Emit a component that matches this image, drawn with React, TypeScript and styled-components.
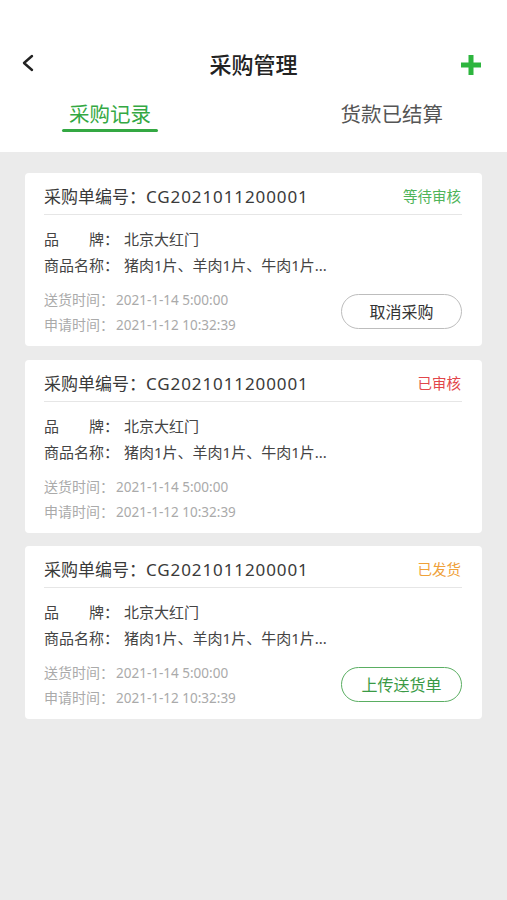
import React, { useState } from "react";
import styled, { createGlobalStyle } from "styled-components";

const GlobalStyle = createGlobalStyle`
  html, body {
    margin: 0;
    padding: 0;
    background: #ebebeb;
    font-family: "Noto Sans", "Noto Sans CJK SC", sans-serif;
  }
`;

const Page = styled.div`
  min-height: 900px;
  background: #ebebeb;
`;

const Header = styled.div`
  background: #ffffff;
  padding-top: 40px;
`;

const NavBar = styled.div`
  height: 46px;
  display: grid;
  grid-template-columns: 60px 1fr 60px;
  align-items: center;
`;

const BackBtn = styled.div`
  display: flex;
  align-items: center;
  padding-left: 21px;
`;

const AddBtn = styled.div`
  display: flex;
  justify-content: flex-end;
  align-items: center;
  padding-right: 25px;
  padding-top: 4px;
`;

const Title = styled.div`
  text-align: center;
  font-family: "Noto Sans CJK SC", sans-serif;
  font-size: 22px;
  font-weight: 500;
  color: #222;
`;

const Tabs = styled.div`
  display: flex;
  justify-content: space-between;
  padding: 12px 57px 20px 62px;
`;

const Tab = styled.div<{ $active?: boolean }>`
  padding: 0 7px;
  display: flex;
  flex-direction: column;
  align-items: stretch;
  cursor: pointer;
  font-family: "Noto Sans CJK SC", sans-serif;
  font-size: 20.5px;
  line-height: 30px;
  color: ${(p) => (p.$active ? "#34a843" : "#555")};
  text-align: center;

  &::after {
    content: "";
    display: block;
    height: 3px;
    margin: 1px -7px 0;
    border-radius: 2px;
    background: ${(p) => (p.$active ? "#34a843" : "transparent")};
  }
`;

const List = styled.div`
  display: flex;
  flex-direction: column;
  gap: 13.5px;
  padding: 21px 25px;
`;

const Card = styled.div`
  background: #fff;
  border-radius: 4px;
  padding: 0 20px 0 19px;
  height: 173px;
  box-sizing: border-box;
`;

const CardHead = styled.div`
  height: 42px;
  display: flex;
  align-items: center;
  justify-content: space-between;
  border-bottom: 1px solid #e6e6e6;
  padding-top: 4px;
  box-sizing: border-box;
`;

const OrderNo = styled.div`
  font-family: "Noto Sans CJK SC", sans-serif;
  font-size: 17px;
  color: #3a3a3a;
`;

const Code = styled.span`
  font-family: "Noto Sans", sans-serif;
  letter-spacing: 0.9px;
`;

const Status = styled.div<{ $color: string }>`
  font-family: "Noto Sans CJK SC", sans-serif;
  font-size: 14.5px;
  color: ${(p) => p.$color};
  padding-right: 1px;
`;

const CardBody = styled.div`
  padding-top: 11px;
`;

const InfoRow = styled.div`
  display: flex;
  font-family: "Noto Sans", "Noto Sans CJK SC", sans-serif;
  font-size: 15px;
  line-height: 26px;
  color: #444;
`;

const Label = styled.div`
  width: 80px;
  flex-shrink: 0;
  display: flex;
  font-family: "Noto Sans CJK SC", sans-serif;
`;

const Justified = styled.span`
  width: 60px;
  text-align-last: justify;
`;

const Footer = styled.div`
  display: flex;
  align-items: center;
  justify-content: space-between;
  margin-top: 9px;
`;

const Times = styled.div`
  font-family: "Noto Sans CJK SC", sans-serif;
  font-size: 14px;
  line-height: 24px;
  color: #aaa;
`;

const TimeValue = styled.span`
  font-family: "Noto Sans", sans-serif;
  font-size: 13.5px;
  margin-left: 2px;
`;

const ActionBtn = styled.button<{ $green?: boolean }>`
  width: 121px;
  height: 35px;
  border-radius: 18px;
  background: #fff;
  border: 1px solid ${(p) => (p.$green ? "#5aae62" : "#bdbdbd")};
  color: ${(p) => (p.$green ? "#3a9a45" : "#333")};
  font-family: "Noto Sans CJK SC", sans-serif;
  font-size: 16px;
  cursor: pointer;
  margin-top: -2px;
`;

type Order = {
  status: string;
  color: string;
  action?: { text: string; green?: boolean };
};

const orders: Order[] = [
  { status: "等待审核", color: "#4fb45a", action: { text: "取消采购" } },
  { status: "已审核", color: "#e2464b" },
  { status: "已发货", color: "#efa13a", action: { text: "上传送货单", green: true } },
];

const OrderCard = ({ order }: { order: Order }) => (
  <Card>
    <CardHead>
      <OrderNo>
        采购单编号：<Code>CG2021011200001</Code>
      </OrderNo>
      <Status $color={order.color}>{order.status}</Status>
    </CardHead>
    <CardBody>
      <InfoRow>
        <Label>
          <Justified>品牌</Justified>：
        </Label>
        北京大红门
      </InfoRow>
      <InfoRow>
        <Label>商品名称：</Label>
        猪肉1片、羊肉1片、牛肉1片...
      </InfoRow>
      <Footer>
        <Times>
          <div>送货时间：<TimeValue>2021-1-14 5:00:00</TimeValue></div>
          <div>申请时间：<TimeValue>2021-1-12 10:32:39</TimeValue></div>
        </Times>
        {order.action && <ActionBtn $green={order.action.green}>{order.action.text}</ActionBtn>}
      </Footer>
    </CardBody>
  </Card>
);

export default function App() {
  const [tab, setTab] = useState(0);
  return (
    <Page>
      <GlobalStyle />
      <Header>
        <NavBar>
          <BackBtn>
            <svg width="14" height="18" viewBox="0 0 14 18">
              <path d="M11 2 L3 9 L11 16" fill="none" stroke="#222" strokeWidth="2.4" strokeLinecap="round" strokeLinejoin="round" />
            </svg>
          </BackBtn>
          <Title>采购管理</Title>
          <AddBtn>
            <svg width="22" height="22" viewBox="0 0 22 22">
              <path d="M11 1 V21 M1 11 H21" stroke="#2db53e" strokeWidth="5" />
            </svg>
          </AddBtn>
        </NavBar>
        <Tabs>
          <Tab $active={tab === 0} onClick={() => setTab(0)}>采购记录</Tab>
          <Tab $active={tab === 1} onClick={() => setTab(1)}>货款已结算</Tab>
        </Tabs>
      </Header>
      <List>
        {orders.map((o, i) => (
          <OrderCard key={i} order={o} />
        ))}
      </List>
    </Page>
  );
}
